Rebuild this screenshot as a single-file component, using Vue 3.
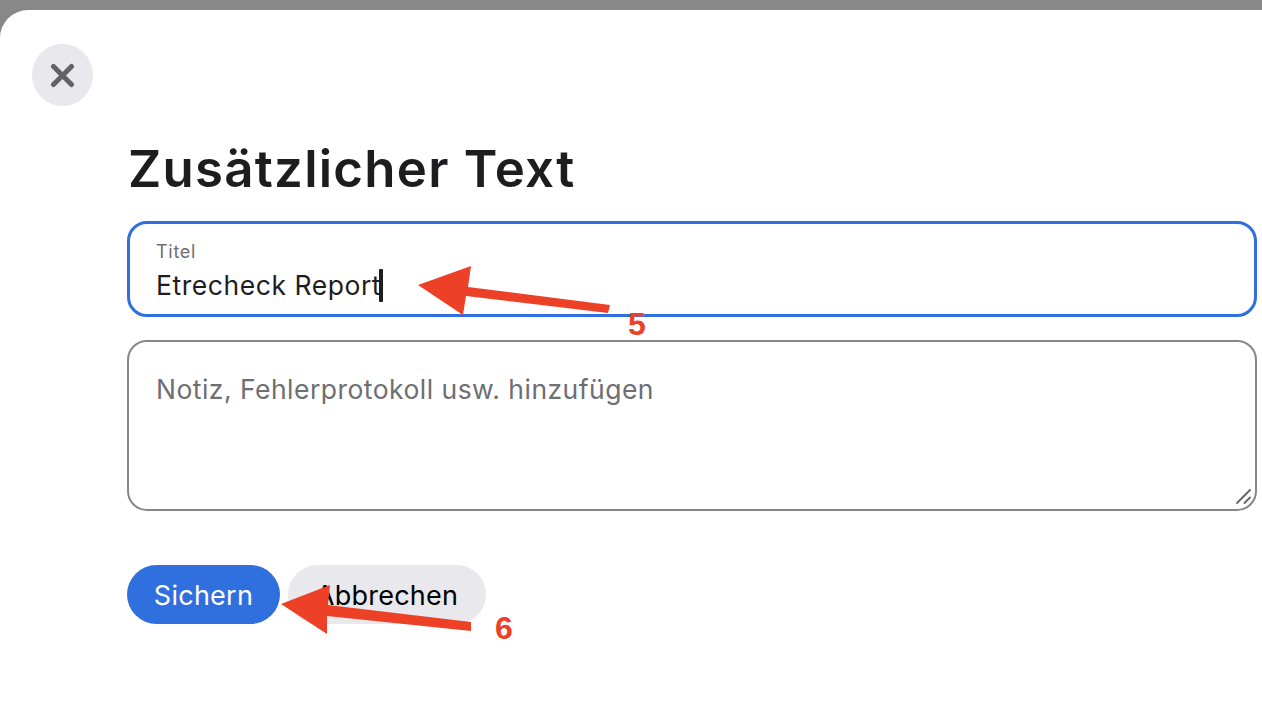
<script setup>
const title = 'Etrecheck Report';
</script>

<template>
  <div class="page">
    <div class="sheet">
      <button class="close" aria-label="Schließen">
        <svg width="25" height="25" viewBox="0 0 25 25">
          <path d="M3.5 3.5 L21.5 21.5 M21.5 3.5 L3.5 21.5" stroke="#636366" stroke-width="5" stroke-linecap="round" />
        </svg>
      </button>

      <div class="content">
        <h1>Zusätzlicher Text</h1>

        <div class="field focused">
          <div class="label">Titel</div>
          <div class="value">{{ title }}<span class="caret"></span></div>
        </div>

        <div class="field area">
          <div class="placeholder">Notiz, Fehlerprotokoll usw. hinzufügen</div>
          <svg class="grip" width="16" height="16" viewBox="0 0 16 16">
            <path d="M1 14 L14 1 M8.5 14 L14 8.5" stroke="#636366" stroke-width="1.8" stroke-linecap="round" />
          </svg>
        </div>

        <div class="actions">
          <button class="btn primary">Sichern</button>
          <button class="btn secondary">Abbrechen</button>
        </div>
      </div>
    </div>

    <!-- Pfeile und Nummern aus der Anleitung -->
    <svg class="marks" width="1262" height="716" viewBox="0 0 1262 716">
      <path d="M418 285 L471 266 L468 287 L610 305 L608 313 L466 296 L463 315 Z" fill="#ec4126" />
      <path d="M281 604 L330 585 L328 605 L471 622 L471 631 L327 616 L327 634 Z" fill="#ec4126" />
    </svg>
    <span class="num n5">5</span>
    <span class="num n6">6</span>
  </div>
</template>

<style>
html, body {
  margin: 0;
  background: #888888;
  overflow: hidden;
}
</style>

<style scoped>
.page {
  position: relative;
  width: 1262px;
  height: 716px;
  padding-top: 10px;
  box-sizing: border-box;
  overflow: hidden;
  background: #888888;
  font-family: Inter, "Liberation Sans", sans-serif;
}
.sheet {
  height: 706px;
  padding: 34px 5px 0 32px;
  box-sizing: border-box;
  background: #fff;
  border-radius: 28px 0 0 0;
}
.close {
  display: flex;
  align-items: center;
  justify-content: center;
  width: 61px;
  height: 62px;
  padding: 0;
  border: 0;
  border-radius: 50%;
  background: #e8e8ed;
}
.content {
  margin-left: 95px;
}
h1 {
  margin: 32px 0 0 1px;
  height: 83px;
  font-size: 51px;
  line-height: 62px;
  font-weight: 600;
  letter-spacing: 1.25px;
  color: #1d1d1f;
}
.field {
  position: relative;
  box-sizing: border-box;
  width: 1130px;
  border-radius: 20px;
  padding: 0 26px;
}
.focused {
  height: 96px;
  border: 3px solid #2f6fde;
  padding-top: 17px;
}
.label {
  font-size: 18px;
  line-height: 22px;
  letter-spacing: 0.7px;
  color: #6e6e73;
}
.value {
  font-size: 26.5px;
  line-height: 36px;
  letter-spacing: 0.55px;
  margin-top: 4px;
  color: #1d1d1f;
  display: flex;
  align-items: center;
}
.caret {
  width: 4px;
  height: 33px;
  margin-left: -2px;
  background: #1d1d1f;
  border-radius: 1px;
}
.area {
  height: 171px;
  margin-top: 23px;
  border: 2px solid #86868b;
  padding: 29px 27px 0 27px;
}
.placeholder {
  font-size: 26.5px;
  line-height: 36px;
  letter-spacing: 0.47px;
  color: #6e6e73;
}
.grip {
  position: absolute;
  right: 3px;
  bottom: 4px;
}
.actions {
  display: flex;
  gap: 8px;
  margin-top: 54px;
}
.btn {
  height: 59px;
  border: 0;
  border-radius: 30px;
  font-family: inherit;
  font-size: 27px;
  letter-spacing: 0.25px;
  padding: 2px 0 0;
}
.primary {
  width: 153px;
  background: #2f6fde;
  color: #fff;
}
.secondary {
  width: 198px;
  background: #e8e8ed;
  color: #000;
}
.marks {
  position: absolute;
  left: 0;
  top: 0;
}
.num {
  position: absolute;
  font-family: "Liberation Sans", sans-serif;
  font-weight: 700;
  font-size: 32px;
  line-height: 36px;
  color: #ec4126;
}
.n5 { left: 628px; top: 306px; }
.n6 { left: 495px; top: 610px; }
</style>
